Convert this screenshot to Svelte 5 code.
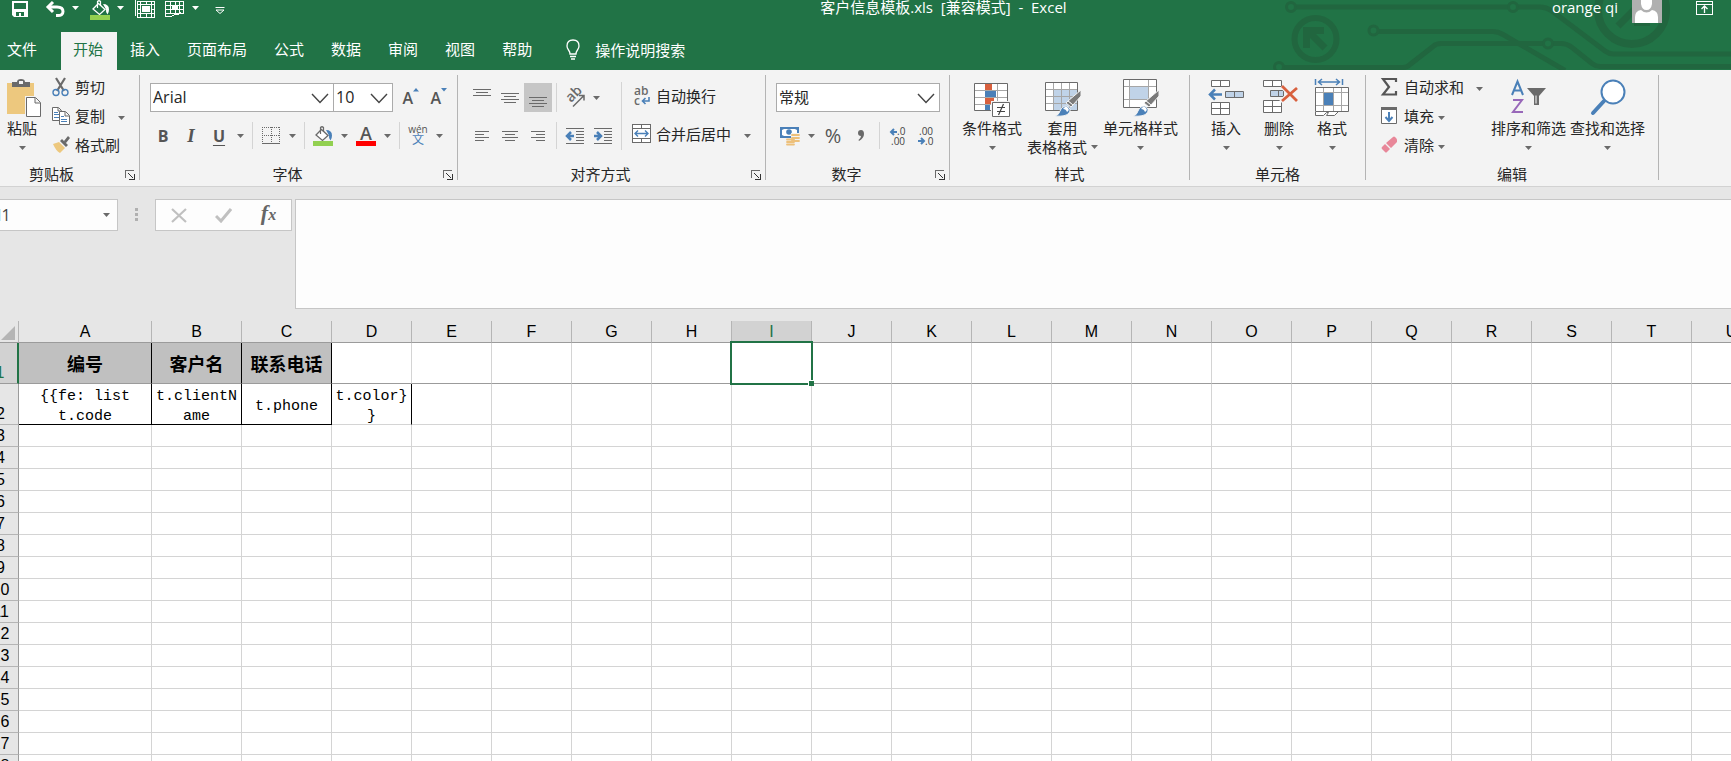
<script lang="ts">
  interface Cell {
    text: string;
    kind: string;
  }

  const tabs = ['文件', '开始', '插入', '页面布局', '公式', '数据', '审阅', '视图', '帮助'];
  const columns = 'ABCDEFGHIJKLMNOPQRSTU'.split('');
  const rows = Array.from({ length: 18 }, (_, i) => i + 1);

  const cells: Record<string, Cell> = {
    A1: { text: '编号', kind: 'head' },
    B1: { text: '客户名', kind: 'head' },
    C1: { text: '联系电话', kind: 'head' },
    A2: { text: '{{fe: list t.code', kind: 'boxed' },
    B2: { text: 't.clientName', kind: 'boxed' },
    C2: { text: 't.phone', kind: 'boxed' },
    D2: { text: 't.color}}', kind: 'side' },
  };

  // [x1, x2, y] per stroke, in a 20x20 box
  const lines: Record<string, number[][]> = {
    top: [[1, 19, 1], [4, 16, 4], [1, 19, 7]],
    middle: [[1, 19, 5], [4, 16, 8], [1, 19, 11], [4, 16, 14]],
    bottom: [[1, 19, 9], [4, 16, 12], [1, 19, 15], [4, 16, 18]],
    left: [[3, 17, 5], [3, 12, 8], [3, 17, 11], [3, 12, 14]],
    center: [[2, 18, 5], [5, 15, 8], [2, 18, 11], [5, 15, 14]],
    right: [[3, 17, 5], [8, 17, 8], [3, 17, 11], [8, 17, 14]],
  };

  let activeTab = $state('开始');
  let selected = $state('I1');
  let vertical = $state('bottom');
</script>

{#snippet arrow()}
  <svg class="arrow" width="7" height="4" viewBox="0 0 7 4"><path d="M0 0h7L3.500 4z" fill="currentColor" /></svg>
{/snippet}

{#snippet caret(label: string)}
  <button class="caret" aria-label={label}>
    <svg width="7" height="4" viewBox="0 0 7 4"><path d="M0 0h7L3.500 4z" fill="currentColor" /></svg>
  </button>
{/snippet}

{#snippet chevron()}
  <svg class="chevron" width="18" height="11" viewBox="0 0 18 11">
    <path d="M1 1l8 8.5L17 1" fill="none" stroke="#444" stroke-width="1.4" />
  </svg>
{/snippet}

{#snippet alignIcon(name: string)}
  <svg width="20" height="20" viewBox="0 0 20 20" stroke="#6a6a6a" shape-rendering="crispEdges">
    {#each lines[name] as [x1, x2, y]}
      <path d="M{x1} {y + 0.5}H{x2}" />
    {/each}
  </svg>
{/snippet}

{#snippet bucket(light: boolean)}
  <svg width="20" height="20" viewBox="0 0 20 20">
    <path d="M8.500 3.500L15 9.500 9.500 14.500 3 9z" fill={light ? 'none' : '#fff'} stroke={light ? '#fff' : '#6a6a6a'} stroke-width="1.300" />
    <path d="M7.500 8V1.500q1.500-1.500 3 0V6" fill="none" stroke={light ? '#fff' : '#6a6a6a'} stroke-width="1.200" />
    <path d="M13 4q6 0 6 5.500 0 3-1.500 5Q15.500 12 16 9.500z" fill={light ? '#fff' : '#4a80b8'} />
    <path d="M0 15h20v5H0z" fill="#92d050" />
  </svg>
{/snippet}

{#snippet brush()}
  <path d="M37 13v6l-8 9-5-4z" fill="#7a7a7a" stroke="#f3f3f3" />
  <path d="M24 24l5 4-2 2-5-4z" fill="#7a7a7a" stroke="#f3f3f3" />
  <path d="M11 39q4-1 5-5 2-5 7-5 5 3 2 7-3 4-14 3z" fill="#4a80b8" stroke="#f3f3f3" />
  <path d="M19 32q3-4 5-1 2 2-1 4-1-3-4-3z" fill="#fff" />
{/snippet}

{#snippet launcher(label: string)}
  <button class="launcher" aria-label={label}>
    <svg width="10" height="10" viewBox="0 0 10 10" fill="none" stroke="#6a6a6a" shape-rendering="crispEdges">
      <path d="M.5 8V.5H9" />
      <path d="M3 3l5 5" stroke="#333" shape-rendering="auto" />
      <path d="M9.500 4v5.500H4" stroke="#333" />
    </svg>
  </button>
{/snippet}

<div class="window">
  <header>
    <svg class="circuit" width="481" height="70" viewBox="0 0 481 70" fill="none" stroke="#21663f" stroke-width="5">
      <path d="M46 7H258M268 7h22q6 0 12 4l53 40q4 3 8 3h118" />
      <circle cx="41" cy="7" r="4.500" stroke-width="3" />
      <circle cx="263" cy="7" r="4.500" stroke-width="3" />
      <circle cx="65.500" cy="39" r="21" stroke-width="6" />
      <path d="M56.500 48V30.500H74M58 31l17 17" stroke-width="7" />
      <path d="M128 31.500h115q5 0 10 3l62 36" />
      <circle cx="123.500" cy="30.500" r="4.500" stroke-width="3" />
      <path d="M34 67.500h119q4 0 7-3l23-18q3-3 8-3h102M303 43.500h8q6 0 11 4l20 16q4 3 8 3h131" />
      <circle cx="298" cy="43.500" r="4.500" stroke-width="3" />
      <circle cx="29" cy="67" r="4.500" stroke-width="3" />
      <circle cx="382" cy="10" r="34" stroke-width="8" />
      <path d="M368 26l22-22M384 22.500h16" stroke-width="7" />
    </svg>

    <div class="titlebar">
      <div class="qat">
        <div class="qat-item">
          <button aria-label="保存">
            <svg width="16" height="20" viewBox="0 0 16 20"><path d="M0 1h16v16H2l-2-2zM2 3v6h12V3zM4 12v4h3v-3h2v3h3v-4z" fill="#fff" fill-rule="evenodd" /></svg>
          </button>
        </div>
        <div class="qat-item">
          <button aria-label="撤消">
            <svg width="20" height="20" viewBox="0 0 20 20" fill="none" stroke="#fff" stroke-width="3">
              <path d="M3 7h9q6 0 6 4.500T12 15.500h-1" /><path d="M8 2L3 7l5 5" />
            </svg>
          </button>
          {@render caret('撤消选项')}
        </div>
        <div class="qat-item">
          <button aria-label="填充颜色">{@render bucket(true)}</button>
          {@render caret('填充颜色选项')}
        </div>
        <div class="qat-item">
          <button aria-label="选择区域">
            <svg width="20" height="20" viewBox="0 0 20 20" fill="none" stroke="#fff" shape-rendering="crispEdges">
              <path d="M.5 0v16M2.500 1.500h17v16h-17zM2 4.500h17M2 13.500h17M5.500 1v16M16.500 1v16M11.500 1v3M11.500 14v3M3 9.500h2M17 9.500h2" />
              <path d="M7 6h8v6H7z" fill="#fff" stroke="none" />
            </svg>
          </button>
          <button aria-label="设置格式">
            <svg width="20" height="20" viewBox="0 0 20 20" fill="none" stroke="#fff" shape-rendering="crispEdges">
              <path d="M.5 1.500h18v12H.5zM0 5.500h18M0 9.500h18M5.500 1v12M10.500 1v4M10.500 10v3M14.500 1v12M.5 13v3.500h6l3-2h4l2-2" />
              <path d="M7 6h6v4H7z" fill="#fff" stroke="none" />
            </svg>
          </button>
          {@render caret('设置格式选项')}
        </div>
        <div class="qat-item">
          <button aria-label="自定义快速访问工具栏">
            <svg width="10" height="20" viewBox="0 0 10 20" fill="none" stroke="#fff"><path d="M.5 7.500h9M1 10l4 3.500L9 10z" /></svg>
          </button>
        </div>
      </div>
      <h1>客户信息模板.xls&nbsp; [兼容模式]&nbsp; -&nbsp; Excel</h1>
      <div class="account">
        <span>orange qi</span>
        <svg width="30" height="23" viewBox="0 0 30 23">
          <path d="M0 0h30v23H0z" fill="#b0b0b0" />
          <path d="M9 0h11v4q-1 6-5.500 6T9 4zM3 23V17q0-6 6-7 5.500 5 11 0 6 1 6 7v6z" fill="#fff" />
        </svg>
        <button aria-label="功能区显示选项">
          <svg width="17" height="20" viewBox="0 0 17 20" fill="none" stroke="#fff">
            <path d="M.5 1.500h16v13H.5zM0 4.500h17" shape-rendering="crispEdges" /><path d="M8.500 13V6.500M5.500 9l3-3 3 3" stroke-width="1.300" />
          </svg>
        </button>
      </div>
    </div>

    <nav>
      {#each tabs as tab}
        <button class="tab" class:active={tab === activeTab} onclick={() => (activeTab = tab)}>{tab}</button>
      {/each}
      <button class="tell-me">
        <svg width="14" height="22" viewBox="0 0 14 22" fill="none" stroke="#fff" stroke-width="1.300">
          <path d="M4 15q0-2-1.500-4T1 7q0-6 6-6t6 6q0 2-1.500 4T10 15zM4 17.500h6M5 20h4" />
        </svg>
        操作说明搜索
      </button>
    </nav>
  </header>

  <section class="ribbon" aria-label="功能区">
    <div class="group clipboard">
      <div class="body">
        <button class="big">
          <svg width="38" height="42" viewBox="0 0 38 42">
            <path d="M4 6h27v31H4z" fill="#edc87e" />
            <path d="M9 10V5h5q0-3 4-3t4 3h5v5z" fill="#6a6a6a" /><path d="M16 4h4v3h-4z" fill="#f3f3f3" />
            <path d="M22 19h11l5 5v16H22z" fill="#f3f3f3" />
            <path d="M23.500 20.500h9l5 5v14h-14zM32 21v5h5" fill="#fff" stroke="#6a6a6a" />
          </svg>
          <span>粘贴</span>
          {@render arrow()}
        </button>
        <div class="stack">
          <div class="line">
            <button class="small">
              <svg width="18" height="20" viewBox="0 0 18 20">
                <path d="M4 1l8 13M13 1L5 14" stroke="#6a6a6a" stroke-width="2.200" />
                <circle cx="4" cy="15.500" r="3" fill="none" stroke="#4a80b8" stroke-width="1.400" />
                <circle cx="13" cy="15.500" r="3" fill="none" stroke="#4a80b8" stroke-width="1.400" />
              </svg>剪切
            </button>
          </div>
          <div class="line">
            <button class="small">
              <svg width="18" height="20" viewBox="0 0 18 20" fill="#fff" stroke="#6a6a6a">
                <path d="M.5 1.500h6l3 3v10h-9zM6 2v3h3" /><path d="M2 6.500h4M2 8.500h5M2 11.500h5" stroke="#4a80b8" />
                <path d="M7.500 5.500h6l4 4v9h-10zM13 6v4h4" /><path d="M9 10.500h3M9 13.500h6M9 15.500h6" stroke="#4a80b8" />
              </svg>复制
            </button>
            <span class="spacer"></span>
            {@render caret('复制选项')}
          </div>
          <div class="line">
            <button class="small">
              <svg width="18" height="20" viewBox="0 0 18 20">
                <path d="M1 9l6-2 6 6-5 5q-4-2-7-9z" fill="#edc87e" />
                <path d="M8 6l2-2 6 6-2 2zM12 6l4-5 2 2-4 5z" fill="#6a6a6a" />
              </svg>格式刷
            </button>
          </div>
        </div>
      </div>
      <footer>剪贴板{@render launcher('剪贴板窗格')}</footer>
    </div>

    <div class="group font">
      <div class="body rows">
        <div class="row first">
          <div class="combo family">
            <select aria-label="字体"><option>Arial</option></select>
            {@render chevron()}
          </div>
          <div class="combo size">
            <select aria-label="字号"><option>10</option></select>
            {@render chevron()}
          </div>
          <button class="tool grow" aria-label="增大字号">A<svg width="6" height="4" viewBox="0 0 6 4"><path d="M0 3.500L3 0l3 3.500z" fill="#4a80b8" /></svg></button>
          <button class="tool grow" aria-label="减小字号">A<svg width="6" height="4" viewBox="0 0 6 4"><path d="M0 0h6L3 3.500z" fill="#4a80b8" /></svg></button>
        </div>
        <div class="row">
          <button class="tool bold">B</button>
          <button class="tool italic">I</button>
          <button class="tool underline">U</button>
          {@render caret('下划线选项')}
          <span class="sep"></span>
          <button class="tool" aria-label="边框">
            <svg width="18" height="20" viewBox="0 0 18 20" fill="none" stroke="#6a6a6a" shape-rendering="crispEdges">
              <path d="M.5 1v16M9.500 1v16M17.500 1v16M0 1.500h18M0 9.500h18" stroke-dasharray="1 1" /><path d="M0 17.500h18" />
            </svg>
          </button>
          {@render caret('边框选项')}
          <span class="sep"></span>
          <button class="tool" aria-label="填充颜色">{@render bucket(false)}</button>
          {@render caret('填充颜色选项')}
          <button class="tool color">A</button>
          {@render caret('字体颜色选项')}
          <span class="sep"></span>
          <button class="tool phonetic"><span>wén</span><b>文</b></button>
          {@render caret('拼音选项')}
        </div>
      </div>
      <footer>字体{@render launcher('字体设置')}</footer>
    </div>

    <div class="group align">
      <div class="body">
        <div class="rows">
          <div class="row first">
            {#each ['top', 'middle', 'bottom'] as name}
              <button class="tool" class:on={vertical === name} aria-label={name} onclick={() => (vertical = name)}>{@render alignIcon(name)}</button>
            {/each}
            <span class="sep"></span>
            <button class="tool" aria-label="方向">
              <svg width="22" height="20" viewBox="0 0 22 20">
                <text x="0" y="0" transform="translate(7 15) rotate(-45)" class="rotated">ab</text>
                <path d="M9 18.500L19.500 8M15 7.500h5v5" fill="none" stroke="#6a6a6a" stroke-width="1.500" />
              </svg>
            </button>
            {@render caret('方向选项')}
          </div>
          <div class="row">
            {#each ['left', 'center', 'right'] as name}
              <button class="tool" aria-label={name}>{@render alignIcon(name)}</button>
            {/each}
            <span class="sep"></span>
            <button class="tool" aria-label="减少缩进量">
              <svg width="20" height="20" viewBox="0 0 20 20">
                <path d="M1 2.500h18M11 5.500h8M11 8.500h8M11 11.500h8M11 14.500h8M1 17.500h18" stroke="#6a6a6a" shape-rendering="crispEdges" />
                <path d="M9 10H2M6 6l-4 4 4 4" fill="none" stroke="#4a80b8" stroke-width="2.500" />
              </svg>
            </button>
            <button class="tool" aria-label="增加缩进量">
              <svg width="20" height="20" viewBox="0 0 20 20">
                <path d="M1 2.500h18M11 5.500h8M11 8.500h8M11 11.500h8M11 14.500h8M1 17.500h18" stroke="#6a6a6a" shape-rendering="crispEdges" />
                <path d="M1 10h7M4 6l4 4-4 4" fill="none" stroke="#4a80b8" stroke-width="2.500" />
              </svg>
            </button>
          </div>
        </div>
        <span class="sep full"></span>
        <div class="rows wrap">
          <div class="row first">
            <button class="small">
              <svg width="19" height="20" viewBox="0 0 19 20">
                <text x="2" y="9" class="mini">ab</text><text x="2" y="19" class="mini">c</text>
                <path d="M17 11v4h-6M13.500 12l-3 3 3 3" fill="none" stroke="#4a80b8" stroke-width="1.600" />
              </svg>自动换行
            </button>
          </div>
          <div class="row">
            <button class="small">
              <svg width="19" height="20" viewBox="0 0 19 20" fill="#fff" stroke="#6a6a6a">
                <path d="M.5.500h18v18H.5zM0 4.500h19M0 14.500h19M9.500 0v4M9.500 15v4" shape-rendering="crispEdges" />
                <path d="M3 9.500h13M6 6.500l-3 3 3 3M13 6.500l3 3-3 3" fill="none" stroke="#4a80b8" stroke-width="1.400" />
              </svg>合并后居中
            </button>
            <span class="spacer"></span>
            {@render caret('合并选项')}
          </div>
        </div>
      </div>
      <footer>对齐方式{@render launcher('对齐设置')}</footer>
    </div>

    <div class="group number">
      <div class="body rows">
        <div class="row first">
          <div class="combo format">
            <select aria-label="数字格式"><option>常规</option></select>
            {@render chevron()}
          </div>
        </div>
        <div class="row">
          <button class="tool" aria-label="会计数字格式">
            <svg width="20" height="20" viewBox="0 0 20 20">
              <path d="M0 1h19v11H0z" fill="#4a80b8" /><path d="M2 4l2-1h11l2 1v5l-2 1H4L2 9z" fill="#fff" />
              <circle cx="9" cy="6" r="2.800" fill="#4a80b8" />
              <path d="M11 7h8v8h-3v5H6v-8h5z" fill="#f3f3f3" />
              <path d="M12 9h7M12 12h7M12 15h7M7 13.500h7M7 16h7M7 18.500h7" stroke="#edc07a" stroke-width="1.800" stroke-linecap="round" />
            </svg>
          </button>
          {@render caret('会计格式选项')}
          <button class="tool percent">%</button>
          <button class="tool comma" aria-label="千位分隔样式">
            <svg width="8" height="12" viewBox="0 0 8 12"><path d="M4 0q3 0 3 4 0 4-5 7l-.5-1q2.500-2 2.500-4-3 0-3-3t3-3z" fill="#6a6a6a" /></svg>
          </button>
          <span class="sep"></span>
          <button class="tool" aria-label="增加小数位数">
            <svg width="18" height="20" viewBox="0 0 18 20">
              <path d="M8 6H2M5 3L2 6l3 3" fill="none" stroke="#4a80b8" stroke-width="2" />
              <text x="8" y="9" class="digits">.0</text><text x="2" y="19" class="digits">.00</text>
            </svg>
          </button>
          <button class="tool" aria-label="减少小数位数">
            <svg width="18" height="20" viewBox="0 0 18 20">
              <path d="M1 15h6M4 12l3 3-3 3" fill="none" stroke="#4a80b8" stroke-width="2" />
              <text x="2" y="9" class="digits">.00</text><text x="8" y="19" class="digits">.0</text>
            </svg>
          </button>
        </div>
      </div>
      <footer>数字{@render launcher('数字设置')}</footer>
    </div>

    <div class="group styles">
      <div class="body">
        <button class="big">
          <svg width="38" height="42" viewBox="0 0 38 42">
            <path d="M1.500 6.500h33v27h-33z" fill="#fff" stroke="#6a6a6a" />
            <path d="M12.500 7v26M24.500 7v26M2 13.500h32M2 20.500h32M2 27.500h32" stroke="#a6a6a6" />
            <path d="M12 7h7v6h-7zM12 21h9v6h-9z" fill="#d8603e" /><path d="M12 14h11v6H12zM12 28h5v5h-5z" fill="#4a80b8" />
            <path d="M18 24h20v16H18z" fill="#f3f3f3" /><path d="M19.500 25.500h17v14h-17z" fill="#fff" stroke="#6a6a6a" />
            <path d="M24 30.500h8M24 34.500h8M30.500 27l-5 11" stroke="#444" stroke-width="1.200" />
          </svg>
          <span>条件格式</span>
          {@render arrow()}
        </button>
        <button class="big">
          <svg width="38" height="42" viewBox="0 0 38 42">
            <path d="M1.500 5.500h32v28h-32z" fill="#fff" stroke="#6a6a6a" /><path d="M10 13h23v20H10z" fill="#c0d3e8" />
            <path d="M9.500 6v27M17.500 6v27M25.500 6v27M2 12.500h31M2 19.500h31M2 26.500h31" stroke="#a6a6a6" />
            {@render brush()}
          </svg>
          <span>套用</span>
          <span class="inline">表格格式{@render arrow()}</span>
        </button>
        <button class="big">
          <svg width="38" height="42" viewBox="0 0 38 42">
            <path d="M1.500 2.500h33v28h-33z" fill="#fff" stroke="#6a6a6a" />
            <path d="M7.500 3v27M26.500 3v27M2 9.500h32M2 22.500h32" stroke="#a6a6a6" />
            <path d="M8 10h18v12H8z" fill="#c0d3e8" />
            {@render brush()}
          </svg>
          <span>单元格样式</span>
          {@render arrow()}
        </button>
      </div>
      <footer>样式</footer>
    </div>

    <div class="group cells">
      <div class="body">
        <button class="big">
          <svg width="38" height="42" viewBox="0 0 38 42" fill="#fff" stroke="#6a6a6a">
            <path d="M4.500 3.500h18v6h-18zM13.500 4v5M4.500 25.500h18v12h-18zM5 31.500h17M13.500 26v11" />
            <path d="M18.500 14.500h18v6h-18zM27.500 15v5" fill="#c0d3e8" />
            <path d="M15 17.500H3M8 12.500l-5 5 5 5" fill="none" stroke="#4a80b8" stroke-width="2.500" />
          </svg>
          <span>插入</span>
          {@render arrow()}
        </button>
        <button class="big">
          <svg width="38" height="42" viewBox="0 0 38 42" fill="#fff" stroke="#6a6a6a">
            <path d="M3.500 3.500h18v6h-18zM12.500 4v5M3.500 23.500h18v12h-18zM4 29.500h17M12.500 24v11" />
            <path d="M10.500 13.500h13v6h-13zM18.500 14v5" fill="#c0d3e8" />
            <path d="M22 9l16 16M37 10L21 25" stroke="#f3f3f3" stroke-width="5" />
            <path d="M22 9l15 15M37 11L22 24" stroke="#d8603e" stroke-width="2.800" />
          </svg>
          <span>删除</span>
          {@render arrow()}
        </button>
        <button class="big">
          <svg width="38" height="42" viewBox="0 0 38 42" fill="#fff" stroke="#6a6a6a">
            <path d="M2.500 10.500h33v24h-33zM2.500 35v3.500h8l3-3h2l-2 3h8l4-4" />
            <path d="M10.500 11v23M20.500 11v23M28.500 11v23M3 15.500h32M3 28.500h32" stroke="#a6a6a6" />
            <path d="M11 16h9v12h-9z" fill="#4a80b8" stroke="none" />
            <path d="M2.500 2v6M29.500 2v6M6 5h20M9 2L5.500 5 9 8M23 2l3.500 3L23 8" fill="none" stroke="#4a80b8" stroke-width="1.500" />
          </svg>
          <span>格式</span>
          {@render arrow()}
        </button>
      </div>
      <footer>单元格</footer>
    </div>

    <div class="group edit">
      <div class="body">
        <div class="stack">
          <div class="line">
            <button class="small">
              <svg width="18" height="20" viewBox="0 0 18 20"><path d="M16 5V2H3l6 8-6 7.500h13V14" fill="none" stroke="#555" stroke-width="2.200" /></svg>自动求和
            </button>
            <span class="spacer"></span>
            {@render caret('自动求和选项')}
          </div>
          <div class="line">
            <button class="small">
              <svg width="18" height="20" viewBox="0 0 18 20">
                <path d="M1.500 1.500h15v16h-15z" fill="#fff" stroke="#6a6a6a" /><path d="M1 1h16v3H1z" fill="#6a6a6a" />
                <path d="M9 6v9M5.500 11L9 15l3.500-4" fill="none" stroke="#4a80b8" stroke-width="2" />
              </svg>填充
            </button>
            {@render caret('填充选项')}
          </div>
          <div class="line">
            <button class="small">
              <svg width="18" height="20" viewBox="0 0 18 20">
                <path d="M13 2q1-1 2 0l1 1q1 1 1 2v2l-6 6-5-5z" fill="#e88799" /><path d="M5 9l5 5-3 3q-1 1-2 0l-3-3q-1-1 0-2z" fill="#e88799" />
              </svg>清除
            </button>
            {@render caret('清除选项')}
          </div>
        </div>
        <button class="big">
          <svg width="38" height="42" viewBox="0 0 38 42">
            <path d="M2 18L7.500 4.500 13 18M4 13.500h7" fill="none" stroke="#4a80b8" stroke-width="2" />
            <path d="M3 23h9L3 35h10" fill="none" stroke="#9868b9" stroke-width="2" />
            <path d="M17 11h19l-7 8v9h-5v-9z" fill="#6a6a6a" /><path d="M26 18.500v8" stroke="#fff" />
          </svg>
          <span>排序和筛选</span>
          {@render arrow()}
        </button>
        <button class="big">
          <svg width="38" height="42" viewBox="0 0 38 42">
            <circle cx="24" cy="15" r="11.500" fill="#fff" stroke="#4a80b8" stroke-width="2" />
            <path d="M15 24L4 36" stroke="#4a80b8" stroke-width="4" stroke-linecap="round" />
          </svg>
          <span>查找和选择</span>
          {@render arrow()}
        </button>
      </div>
      <footer>编辑</footer>
    </div>
  </section>

  <section class="formula">
    <div class="name-box">
      <input aria-label="名称框" bind:value={selected} />
      {@render caret('名称列表')}
    </div>
    <span class="grip"><i></i><i></i><i></i></span>
    <div class="actions">
      <button aria-label="取消">
        <svg width="16" height="15" viewBox="0 0 16 15"><path d="M1 1l14 13M15 1L1 14" stroke="#c0c0c0" stroke-width="2.200" /></svg>
      </button>
      <button aria-label="输入">
        <svg width="17" height="15" viewBox="0 0 17 15"><path d="M1 8l5 5L16 1" fill="none" stroke="#c0c0c0" stroke-width="3" /></svg>
      </button>
      <button class="fx" aria-label="插入函数">f<small>x</small></button>
    </div>
    <textarea aria-label="编辑栏"></textarea>
  </section>

  <main>
    <table>
      <colgroup>
        <col class="c-num" />
        {#each columns as col}
          <col class={col === 'A' ? 'c-wide' : col === 'B' || col === 'C' ? 'c-mid' : 'c-std'} />
        {/each}
      </colgroup>
      <thead>
        <tr>
          <th class="corner"><svg width="14" height="14" viewBox="0 0 14 14"><path d="M14 0v14H0z" fill="#b5b5b5" /></svg></th>
          {#each columns as col}
            <th class:current={selected[0] === col}>{col}</th>
          {/each}
        </tr>
      </thead>
      <tbody>
        {#each rows as row}
          <tr class:tall={row < 3} class:frozen={row === 1}>
            <th class:current={selected.slice(1) === String(row)}>{row}</th>
            {#each columns as col}
              {@const cell = cells[col + row]}
              <td class={cell?.kind} class:selected={selected === col + row} onclick={() => (selected = col + row)}>
                {#if cell}<span>{cell.text}</span>{/if}
              </td>
            {/each}
          </tr>
        {/each}
      </tbody>
    </table>
  </main>
</div>

<style>
  :global(body) {
    margin: 0;
    overflow: hidden;
  }

  .window {
    display: flex;
    flex-direction: column;
    height: 100vh;
    background: #e6e6e6;
    color: #262626;
    font: 15px/20px 'Open Sans', 'Noto Sans CJK SC', sans-serif;
    white-space: nowrap;
  }

  button,
  select,
  input,
  textarea {
    margin: 0;
    padding: 0;
    border: 0;
    background: none;
    color: inherit;
    font: inherit;
    outline: none;
  }

  button {
    display: flex;
    align-items: center;
    justify-content: center;
    flex: none;
    white-space: nowrap;
  }

  svg {
    display: block;
    flex: none;
  }

  header {
    position: relative;
    flex: none;
    background: #217346;
    color: #fff;
    overflow: hidden;
  }

  .circuit {
    position: absolute;
    top: 0;
    right: 0;
  }

  .titlebar {
    position: relative;
    display: flex;
    align-items: flex-start;
    height: 32px;
  }

  .qat {
    display: flex;
    gap: 5px;
    width: 330px;
    padding-left: 5px;
  }

  .qat-item {
    display: flex;
  }

  .qat button {
    width: 30px;
  }

  .qat .caret {
    width: 10px;
    height: 16px;
    color: #fff;
  }

  h1 {
    flex: 1;
    margin: 0;
    font-size: 15px;
    font-weight: 400;
    line-height: 14px;
    text-align: center;
  }

  .account {
    display: flex;
    align-items: flex-start;
    padding-right: 18px;
    line-height: 14px;
  }

  .account svg {
    margin-left: 14px;
  }

  .account button svg {
    margin-left: 34px;
  }

  nav {
    position: relative;
    display: flex;
    gap: 1px;
    height: 38px;
  }

  .tab {
    padding: 0 14px 4px 12px;
  }

  .tab:first-child {
    padding: 0 23px 4px 7px;
  }

  .tell-me {
    gap: 15px;
    padding: 0 0 2px 19px;
  }

  .tab.active {
    background: #f3f3f3;
    color: #217346;
  }

  .ribbon {
    display: flex;
    flex: none;
    height: 105px;
    padding: 5px 0 6px;
    background: #f3f3f3;
    border-bottom: 1px solid #d2d2d2;
  }

  .group {
    display: flex;
    flex-direction: column;
    flex: none;
    box-sizing: border-box;
    border-right: 1px solid #b4b4b4;
  }

  .clipboard { width: 140px; }
  .font { width: 318px; }
  .align { width: 308px; }
  .number { width: 184px; }
  .styles { width: 240px; }
  .cells { width: 176px; }
  .edit { width: 293px; }

  .body {
    display: flex;
    height: 93px;
  }

  .group footer {
    position: relative;
    height: 12px;
    line-height: 12px;
    text-align: center;
  }

  .font footer,
  .align footer,
  .number footer {
    padding-right: 22px;
  }

  .clipboard footer {
    padding-right: 36px;
  }

  .launcher {
    position: absolute;
    right: 4px;
    bottom: 0;
  }

  .rows {
    display: flex;
    flex-direction: column;
    gap: 10px;
    padding: 8px 0 0;
  }

  .body.rows {
    height: 85px;
    padding-left: 9px;
  }

  .number .body.rows,
  .align .body {
    padding-left: 10px;
  }

  .row,
  .line {
    display: flex;
    align-items: center;
    height: 27px;
  }

  .row.first {
    height: 29px;
  }

  .stack {
    display: flex;
    flex-direction: column;
    gap: 2px;
  }

  .spacer {
    width: 9px;
  }

  .tool {
    width: 28px;
    height: 100%;
    color: #555;
  }

  .tool.on {
    background: #c6c6c6;
  }

  .caret {
    width: 15px;
    height: 100%;
    color: #6a6a6a;
  }

  .arrow {
    color: #6a6a6a;
  }

  .sep {
    align-self: stretch;
    width: 1px;
    margin: 0 4px;
    background: #d4d4d4;
  }

  .sep.full {
    height: 68px;
    margin: 7px 4px 0;
  }

  .small {
    gap: 5px;
    padding-bottom: 3px;
  }

  .edit .small {
    gap: 6px;
  }

  .wrap {
    padding-left: 6px;
  }

  .combo {
    position: relative;
    box-sizing: border-box;
    height: 29px;
    border: 1px solid #ababab;
    background: #fff;
  }

  .combo select {
    width: 100%;
    height: 27px;
    padding: 0 0 2px 2px;
    appearance: none;
    font-size: 16px;
  }

  .combo.format select {
    font-size: 15px;
  }

  .chevron {
    position: absolute;
    top: 9px;
    right: 4px;
    pointer-events: none;
  }

  .family {
    width: 184px;
    margin-left: 1px;
  }

  .size {
    width: 60px;
    margin-left: -1px;
  }

  .format {
    width: 164px;
  }

  .grow {
    justify-content: flex-end;
    padding-right: 2px;
    box-sizing: border-box;
    font-size: 16px;
    font-weight: 600;
    line-height: 16px;
  }

  .grow svg {
    margin-bottom: 16px;
  }

  .bold {
    font-size: 16px;
    font-weight: 700;
  }

  .italic {
    font-family: 'Liberation Serif', serif;
    font-size: 19px;
    font-style: italic;
    font-weight: 700;
  }

  .underline {
    font-size: 16px;
    font-weight: 700;
    text-decoration: underline;
    text-decoration-thickness: 1px;
    text-underline-offset: 3px;
  }

  .color {
    align-items: flex-start;
    height: 20px;
    width: 20px;
    margin: 0 4px;
    border-bottom: 5px solid #f00;
    box-sizing: border-box;
    font-size: 18px;
    font-weight: 600;
    line-height: 14px;
  }

  .phonetic {
    flex-direction: column;
    font-size: 10px;
    line-height: 9px;
  }

  .phonetic b {
    color: #4a80b8;
    font-size: 12px;
    font-weight: 400;
    line-height: 12px;
  }

  .rotated {
    font-size: 14px;
    font-weight: 600;
    fill: #6a6a6a;
  }

  .mini {
    font-size: 12px;
    font-weight: 600;
    fill: #6a6a6a;
  }

  .digits {
    font-size: 10px;
    fill: #444;
  }

  .percent {
    font-size: 20px;
  }

  .big {
    flex-direction: column;
    justify-content: flex-start;
    padding-top: 2px;
    line-height: 18px;
  }

  .big > .arrow {
    margin-top: 9px;
  }

  .inline {
    display: flex;
    align-items: center;
    gap: 4px;
    line-height: 20px;
  }

  .clipboard .big {
    width: 44px;
    margin-right: 8px;
  }

  .styles .body {
    gap: 5px;
    padding-left: 12px;
  }

  .cells .body {
    gap: 1px;
    padding-left: 10px;
  }

  .cells .big {
    width: 52px;
  }

  .edit .body {
    gap: 4px;
    padding-left: 14px;
  }

  .edit .stack {
    width: 107px;
  }

  .formula {
    display: flex;
    align-items: flex-start;
    flex: none;
    padding: 12px 0;
  }

  .name-box {
    display: flex;
    box-sizing: border-box;
    width: 132px;
    height: 32px;
    margin-left: -14px;
    padding: 0 3px 0 10px;
    border: 1px solid #c6c6c6;
    background: #fdfdfd;
  }

  .name-box input {
    flex: 1;
    min-width: 0;
    color: #444;
    font-size: 16px;
  }

  .grip {
    display: flex;
    flex-direction: column;
    gap: 2px;
    width: 3px;
    margin: 9px 17px 0;
  }

  .grip i {
    height: 3px;
    background: #b0b0b0;
  }

  .actions {
    display: flex;
    box-sizing: border-box;
    width: 137px;
    height: 32px;
    margin-right: 3px;
    border: 1px solid #c6c6c6;
    background: #fdfdfd;
  }

  .actions button {
    width: 45px;
  }

  .actions .fx {
    align-items: baseline;
    color: #666;
    font: italic 700 22px/26px 'Liberation Serif', serif;
  }

  .fx small {
    font-size: 16px;
  }

  textarea {
    flex: 1;
    box-sizing: border-box;
    height: 110px;
    border: 1px solid #c6c6c6;
    border-right: 0;
    background: #fdfdfd;
    resize: none;
  }

  main {
    flex: 1;
    min-height: 0;
    overflow: hidden;
  }

  table {
    width: 1789px;
    margin-left: -17px;
    border-collapse: separate;
    border-spacing: 0;
    table-layout: fixed;
    background: #fff;
  }

  .c-num { width: 36px; }
  .c-wide { width: 133px; }
  .c-mid { width: 90px; }
  .c-std { width: 80px; }

  th,
  td {
    box-sizing: border-box;
    height: 22px;
    padding: 0;
    border: solid #d4d4d4;
    border-width: 0 1px 1px 0;
    line-height: 20px;
    text-align: center;
    vertical-align: middle;
  }

  th {
    padding-top: 1px;
    border-color: #b5b5b5;
    background: #e6e6e6;
    color: #000;
    font: 16px/20px 'Liberation Sans', Arial, sans-serif;
  }

  thead th {
    border-bottom-color: #9b9b9b;
  }

  tbody th {
    border-right-color: #9b9b9b;
    vertical-align: bottom;
  }

  th.current {
    background: #d2d2d2;
    color: #217346;
  }

  tbody th.current {
    border-right: 2px solid #217346;
  }

  .corner svg {
    margin: 2px 0 0 18px;
  }

  .tall th,
  .tall td {
    height: 41px;
  }

  td {
    color: #000;
    font-family: 'Liberation Mono', 'Noto Sans CJK SC', monospace;
    overflow-wrap: anywhere;
    white-space: normal;
  }

  td span {
    display: block;
    margin: 3px 0 -3px;
  }

  .head {
    border-right-color: #000;
    background: #c0c0c0;
    font-size: 18px;
    font-weight: 700;
  }

  .boxed {
    border-color: #000;
  }

  .side {
    border-right-color: #000;
  }

  .frozen th,
  .frozen td {
    border-bottom-color: #9b9b9b;
  }

  .selected {
    position: relative;
  }

  .selected::before {
    position: absolute;
    inset: -2px;
    border: 2px solid #217346;
    content: '';
  }

  .selected::after {
    position: absolute;
    right: -3px;
    bottom: -3px;
    width: 5px;
    height: 5px;
    border: solid #fff;
    border-width: 1px 0 0 1px;
    background: #217346;
    content: '';
  }
</style>
